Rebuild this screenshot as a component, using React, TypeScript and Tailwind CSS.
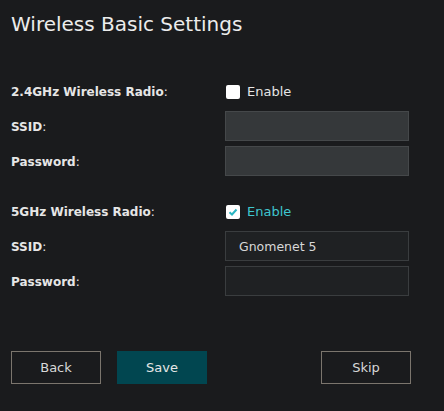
import React, { useState } from 'react';

const font = { fontFamily: '"DejaVu Sans", Verdana, sans-serif' };

const Checkbox = ({ checked, onChange }: { checked: boolean; onChange: () => void }) => (
  <button
    type="button"
    onClick={onChange}
    className="w-[14px] h-[14px] bg-white rounded-[2px] flex items-center justify-center"
  >
    {checked && (
      <svg width="10" height="10" viewBox="0 0 10 10">
        <path d="M1.5 5.2 L4 7.5 L8.5 2.5" stroke="#2ab5c2" strokeWidth="2" fill="none" />
      </svg>
    )}
  </button>
);

const Label = ({ text, w }: { text: string; w: string }) => (
  <div className={`${w} text-[12px] text-[#e6e6e6]`}>
    <span className="font-bold">{text}</span>:
  </div>
);

const Radio = ({ label, enabled, ssid }: { label: string; enabled: boolean; ssid: string }) => {
  const [on, setOn] = useState(enabled);
  const inputCls = on
    ? 'bg-[#1f2123] border-[#3a3d3f]'
    : 'bg-[#35383a] border-[#45484a]';
  return (
    <div className="flex flex-col">
      <div className="flex items-center h-[30px] pt-[1px]">
        <Label text={label} w="w-[215px]" />
        <Checkbox checked={on} onChange={() => setOn(!on)} />
        <span className={`ml-[7px] text-[13px] ${on ? 'text-[#3fc6cf]' : 'text-[#e6e6e6]'}`}>
          Enable
        </span>
      </div>
      <div className="flex flex-col gap-[5px] mt-[5px]">
        {['SSID', 'Password'].map((f) => (
          <div key={f} className="flex items-center">
            <Label text={f} w="w-[214px] pt-[1px]" />
            <input
              disabled={!on}
              defaultValue={f === 'SSID' ? ssid : ''}
              type={f === 'Password' ? 'password' : 'text'}
              className={`w-[184px] h-[30px] border px-[13px] text-[12.5px] text-[#d8d8d8] outline-none ${inputCls}`}
            />
          </div>
        ))}
      </div>
    </div>
  );
};

export default function App() {
  return (
    <div className="w-[444px] h-[411px] bg-[#1a1b1d] px-[11px] pt-[11px] flex flex-col" style={font}>
      <h1 className="text-[20px] text-[#ececec] leading-[26px]">Wireless Basic Settings</h1>
      <div className="mt-[39px]">
        <Radio label="2.4GHz Wireless Radio" enabled={false} ssid="" />
      </div>
      <div className="mt-[20px]">
        <Radio label="5GHz Wireless Radio" enabled={true} ssid="Gnomenet 5" />
      </div>
      <div className="flex mt-[55px]">
        <button className="w-[90px] h-[33px] border border-[#7b756d] text-[13px] text-[#d8d8d8]">
          Back
        </button>
        <button className="w-[90px] h-[33px] ml-[16px] bg-[#014650] text-[13px] text-[#e6e6e6]">
          Save
        </button>
        <button className="w-[90px] h-[33px] ml-auto mr-[22px] border border-[#7b756d] text-[13px] text-[#d8d8d8]">
          Skip
        </button>
      </div>
    </div>
  );
}
